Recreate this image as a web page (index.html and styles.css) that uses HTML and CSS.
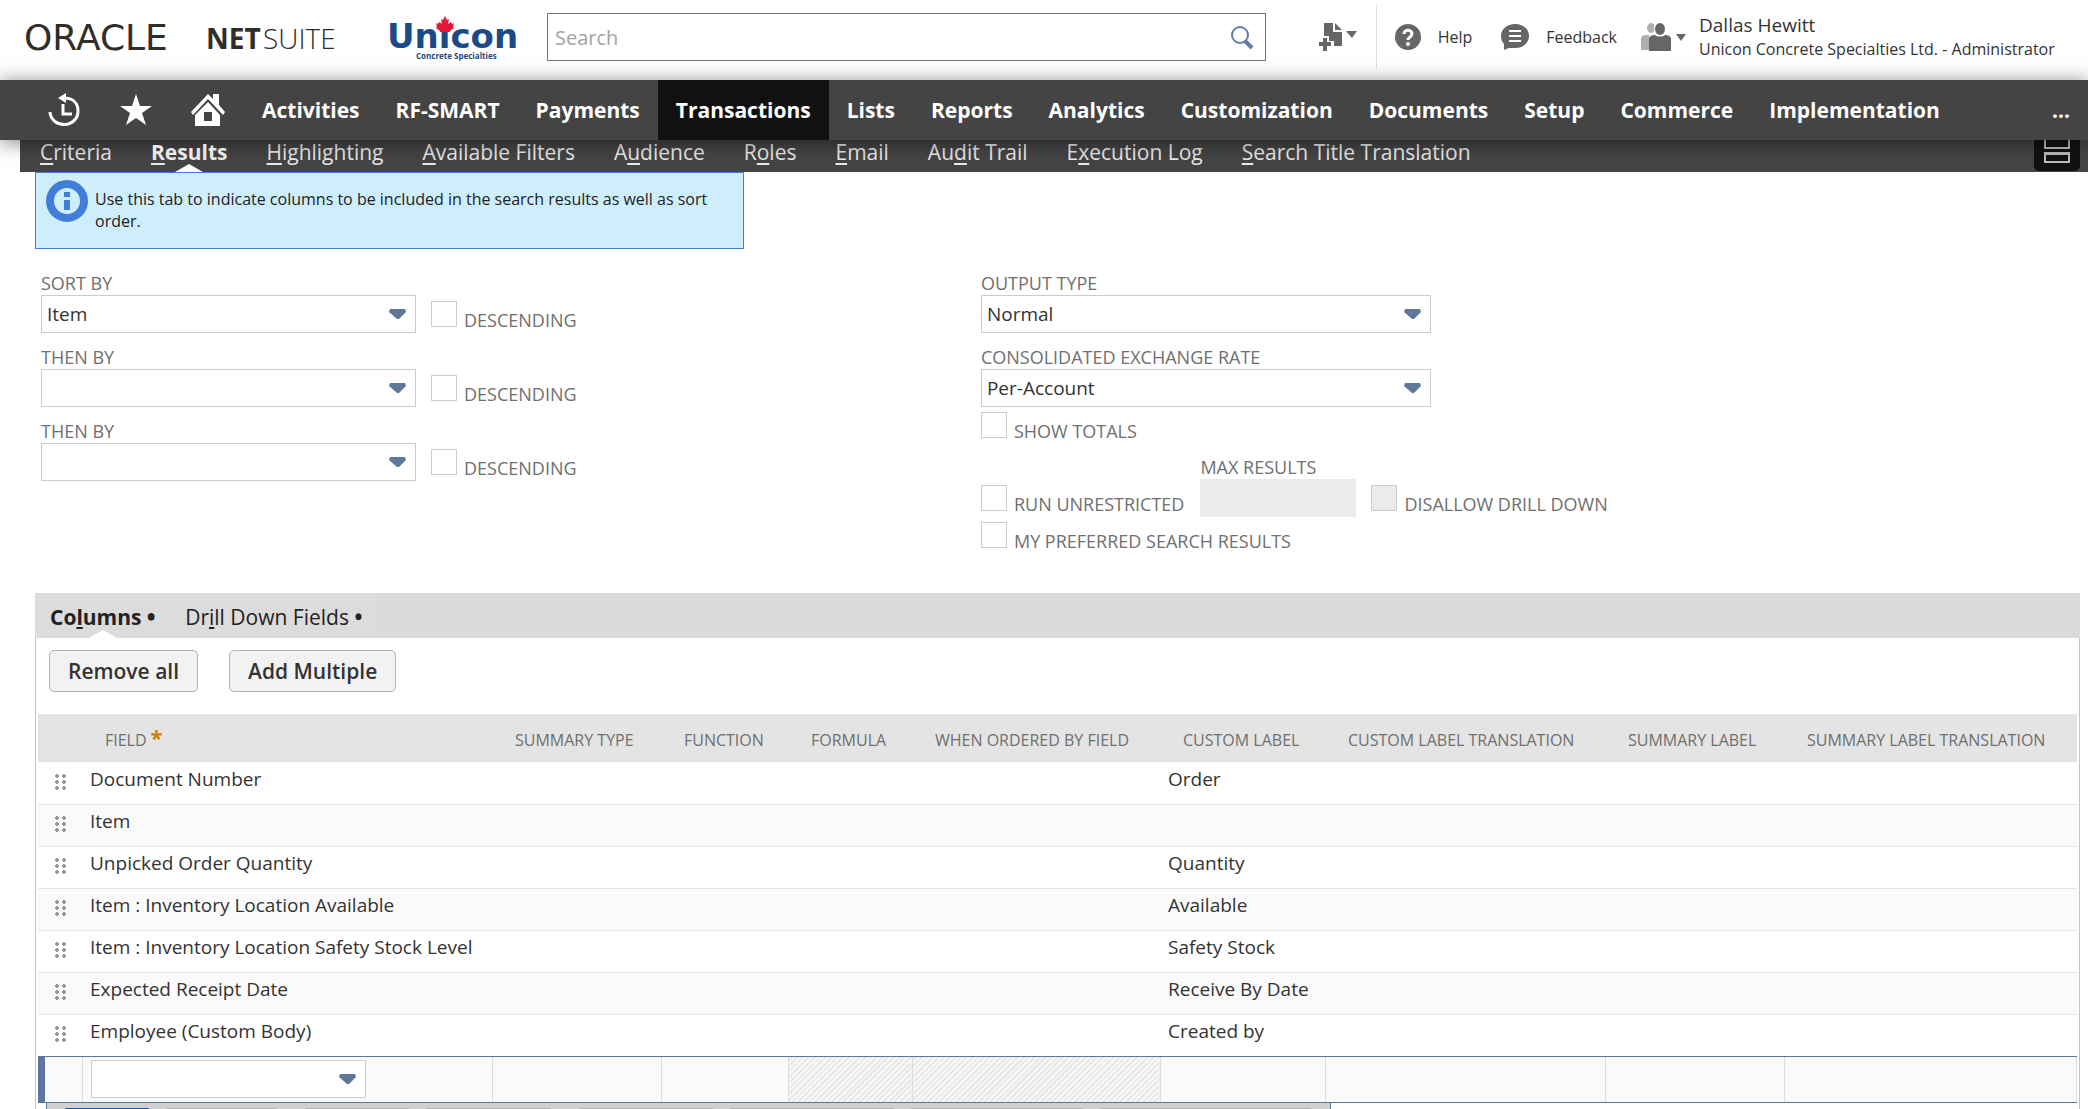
FILE: index.html
```html
<!DOCTYPE html>
<html lang="en">
<head>
  <meta charset="UTF-8">
  <meta name="viewport" content="width=device-width, initial-scale=1.0">
  <title>Saved Search - NetSuite</title>
  <link rel="stylesheet" href="styles.css">
</head>
<body>
<header class="topbar">
  <a class="logo" href="#" aria-label="Oracle NetSuite">
    <svg width="320" height="34" viewBox="0 0 320 34">
      <text class="logo-oracle" x="-2" y="30">ORACLE</text>
      <text class="logo-net" x="180" y="29">NET</text>
      <text class="logo-suite" x="237" y="29">SUITE</text>
    </svg>
  </a>
  <a class="company-logo" href="#" aria-label="Unicon Concrete Specialties">
    <svg width="137" height="48" viewBox="0 0 137 48">
      <text class="logo-unicon" x="-1" y="35">Unicon</text>
      <text class="logo-sub" x="28" y="46">Concrete Specialties</text>
      <path fill="#e31937" d="M57 3l2 4 2-1-1 5 3-2 1 2 2-1-1 4 1 1-4 3v1H52v-1l-4-3 1-1-1-4 2 1 1-2 3 2-1-5 2 1z"/>
    </svg>
  </a>
  <form class="search">
    <input type="text" placeholder="Search" aria-label="Search">
    <button type="button" aria-label="Run search">
      <svg width="26" height="26" viewBox="0 0 26 26" fill="none" stroke="#607da8">
        <circle cx="11" cy="11" r="8" stroke-width="2"/>
        <path d="M16 17l7 7" stroke-width="4"/>
      </svg>
    </button>
  </form>
  <div class="tools">
    <button class="create" aria-label="Create new">
      <svg width="40" height="30" viewBox="0 0 40 30" fill="#666">
        <path d="M6 1h9v9h9v14h-8v-5h-5v-5H6z"/>
        <path d="M17 1l7 7h-7z"/>
        <path d="M5 16h4v4h4v4H9v5H5v-5H1v-4h4z"/>
        <path d="M28 9h11l-5 7z"/>
      </svg>
    </button>
    <a class="tool help" href="#">
      <svg width="26" height="26" viewBox="0 0 26 26">
        <circle cx="13" cy="13" r="13" fill="#666"/>
        <path d="M9 10c0-5 8-5 8 0 0 3-4 3-4 6" fill="none" stroke="#fff" stroke-width="3"/>
        <circle cx="13" cy="20" r="2" fill="#fff"/>
      </svg>
      Help
    </a>
    <a class="tool feedback" href="#">
      <svg width="28" height="26" viewBox="0 0 28 26">
        <path d="M14 0c8 0 14 5 14 12s-6 12-14 12c-3 0-5 0-6 0l-5 2v-6C1 18 0 15 0 12 0 5 6 0 14 0z" fill="#666"/>
        <path d="M8 7h12M8 12h12M8 17h12" stroke="#fff" stroke-width="2"/>
      </svg>
      Feedback
    </a>
    <button class="role" aria-label="Change role">
      <svg width="46" height="30" viewBox="0 0 46 30">
        <g fill="#b0b0b0"><ellipse cx="10" cy="6" rx="4" ry="5"/><path d="M0 28V17c0-3 2-4 6-4h2v15z"/></g>
        <ellipse cx="19" cy="6" rx="6" ry="7" fill="#fff"/>
        <g fill="#666"><ellipse cx="19" cy="7" rx="5" ry="6"/><path d="M8 29V17c0-3 3-4 6-4 2 2 8 2 10 0 3 0 6 1 6 4v12z"/><path d="M35 12h10l-5 7z"/></g>
      </svg>
    </button>
    <div class="user">
      <div class="user-name">Dallas Hewitt</div>
      <div>Unicon Concrete Specialties Ltd. - Administrator</div>
    </div>
  </div>
</header>

<nav class="mainnav">
  <a class="icon" href="#" aria-label="Recent records">
    <svg width="32" height="34" viewBox="0 0 32 34" fill="none" stroke="#fff" stroke-width="3">
      <path d="M2 19a14 13 0 0 0 28-1C30 10 25 5 16 5"/>
      <path d="M10 5l8-5v10z" fill="#fff" stroke="none"/>
      <path d="M15 11v10h9"/>
    </svg>
  </a>
  <a class="icon" href="#" aria-label="Shortcuts">
    <svg width="32" height="32" viewBox="0 0 32 32"><path fill="#fff" d="M16 0l4 12h12l-10 7 4 12-10-7-10 7 4-12L0 12h12z"/></svg>
  </a>
  <a class="icon" href="#" aria-label="Home">
    <svg width="36" height="34" viewBox="0 0 36 34" fill="#fff">
      <path d="M18 1l5 5V1h6v11l6 7-2 3L18 6 3 22l-2-3z"/>
      <path fill-rule="evenodd" d="M18 9l12 13v11H5V22zM14 19v9h8v-9z"/>
    </svg>
  </a>
  <a href="#">Activities</a>
  <a href="#">RF-SMART</a>
  <a href="#">Payments</a>
  <a class="active" href="#">Transactions</a>
  <a href="#">Lists</a>
  <a href="#">Reports</a>
  <a href="#">Analytics</a>
  <a href="#">Customization</a>
  <a href="#">Documents</a>
  <a href="#">Setup</a>
  <a href="#">Commerce</a>
  <a href="#">Implementation</a>
  <a class="more" href="#">...</a>
</nav>

<nav class="subnav">
  <a href="#"><u>C</u>riteria</a>
  <a class="active" href="#"><u>R</u>esults</a>
  <a href="#"><u>H</u>ighlighting</a>
  <a href="#"><u>A</u>vailable Filters</a>
  <a href="#">A<u>u</u>dience</a>
  <a href="#">R<u>o</u>les</a>
  <a href="#"><u>E</u>mail</a>
  <a href="#">Au<u>d</u>it Trail</a>
  <a href="#">E<u>x</u>ecution Log</a>
  <a href="#"><u>S</u>earch Title Translation</a>
  <button class="layout" aria-label="Page layout">
    <svg width="26" height="24" viewBox="0 0 26 24" fill="none" stroke="#bbb" stroke-width="2">
      <path d="M1 0v8h24V0M1 13h24v9H1zM1 14h24"/>
    </svg>
  </button>
</nav>

<main>
  <div class="notice">
    <svg width="42" height="42" viewBox="0 0 42 42">
      <circle cx="21" cy="21" r="17" fill="none" stroke="#417ed9" stroke-width="8"/>
      <path d="M18 12h6v5h-6zM18 20h6v10h-6z" fill="#417ed9"/>
    </svg>
    <p>Use this tab to indicate columns to be included in the search results as well as sort order.</p>
  </div>

  <div class="options">
    <div class="sorting">
      <div class="line">
        <div class="field">
          <label for="sort1">SORT BY</label>
          <select id="sort1"><option>Item</option></select>
        </div>
        <div class="check"><input type="checkbox" id="desc1"><label for="desc1">DESCENDING</label></div>
      </div>
      <div class="line">
        <div class="field">
          <label for="sort2">THEN BY</label>
          <select id="sort2"><option></option></select>
        </div>
        <div class="check"><input type="checkbox" id="desc2"><label for="desc2">DESCENDING</label></div>
      </div>
      <div class="line">
        <div class="field">
          <label for="sort3">THEN BY</label>
          <select id="sort3"><option></option></select>
        </div>
        <div class="check"><input type="checkbox" id="desc3"><label for="desc3">DESCENDING</label></div>
      </div>
    </div>
    <div class="output">
      <div class="line">
        <div class="field">
          <label for="outputType">OUTPUT TYPE</label>
          <select id="outputType"><option>Normal</option></select>
        </div>
      </div>
      <div class="line">
        <div class="field">
          <label for="rate">CONSOLIDATED EXCHANGE RATE</label>
          <select id="rate"><option>Per-Account</option></select>
        </div>
      </div>
      <div class="check short"><input type="checkbox" id="totals"><label for="totals">SHOW TOTALS</label></div>
      <div class="line limits">
        <div class="check"><input type="checkbox" id="unrestricted"><label for="unrestricted">RUN UNRESTRICTED</label></div>
        <div class="field max">
          <label for="maxResults">MAX RESULTS</label>
          <input type="text" id="maxResults" disabled>
        </div>
        <div class="check"><input type="checkbox" id="drill" disabled><label for="drill">DISALLOW DRILL DOWN</label></div>
      </div>
      <div class="check short"><input type="checkbox" id="preferred"><label for="preferred">MY PREFERRED SEARCH RESULTS</label></div>
    </div>
  </div>

  <section class="sublist">
    <div class="tabs">
      <a class="active" href="#">Co<u>l</u>umns <b>•</b></a>
      <a href="#">Dr<u>i</u>ll Down Fields <b>•</b></a>
    </div>
    <div class="panel">
      <div class="actions">
        <button>Remove all</button>
        <button>Add Multiple</button>
      </div>
      <table>
        <colgroup>
          <col class="c-drag"><col class="c-field"><col class="c-type"><col class="c-function"><col class="c-formula">
          <col class="c-ordered"><col class="c-label"><col class="c-translation"><col class="c-summary"><col>
        </colgroup>
        <thead>
          <tr>
            <th></th>
            <th>FIELD<span class="required">*</span></th>
            <th>SUMMARY TYPE</th>
            <th>FUNCTION</th>
            <th>FORMULA</th>
            <th>WHEN ORDERED BY FIELD</th>
            <th>CUSTOM LABEL</th>
            <th>CUSTOM LABEL TRANSLATION</th>
            <th>SUMMARY LABEL</th>
            <th>SUMMARY LABEL TRANSLATION</th>
          </tr>
        </thead>
        <tbody>
          <tr><td><i class="grip"></i></td><td>Document Number</td><td></td><td></td><td></td><td></td><td>Order</td><td></td><td></td><td></td></tr>
          <tr><td><i class="grip"></i></td><td>Item</td><td></td><td></td><td></td><td></td><td></td><td></td><td></td><td></td></tr>
          <tr><td><i class="grip"></i></td><td>Unpicked Order Quantity</td><td></td><td></td><td></td><td></td><td>Quantity</td><td></td><td></td><td></td></tr>
          <tr><td><i class="grip"></i></td><td>Item : Inventory Location Available</td><td></td><td></td><td></td><td></td><td>Available</td><td></td><td></td><td></td></tr>
          <tr><td><i class="grip"></i></td><td>Item : Inventory Location Safety Stock Level</td><td></td><td></td><td></td><td></td><td>Safety Stock</td><td></td><td></td><td></td></tr>
          <tr><td><i class="grip"></i></td><td>Expected Receipt Date</td><td></td><td></td><td></td><td></td><td>Receive By Date</td><td></td><td></td><td></td></tr>
          <tr><td><i class="grip"></i></td><td>Employee (Custom Body)</td><td></td><td></td><td></td><td></td><td>Created by</td><td></td><td></td><td></td></tr>
          <tr class="editing">
            <td></td>
            <td><select aria-label="Field"><option></option></select></td>
            <td></td><td></td><td class="locked"></td><td class="locked"></td><td></td><td></td><td></td><td></td>
          </tr>
        </tbody>
      </table>
      <div class="rowbuttons">
        <button class="primary">Add</button>
        <button>Cancel</button>
        <button class="first">Insert</button>
        <button>Remove</button>
        <button class="first">Move Up</button>
        <button>Move Down</button>
        <button>Move To Top</button>
        <button>Move To Bottom</button>
      </div>
    </div>
  </section>
</main>
</body>
</html>
```
FILE: styles.css
```css
* {
  box-sizing: border-box;
}
body {
  margin: 0;
  height: 100vh;
  overflow: hidden;
  font-family: "Open Sans", sans-serif;
  font-size: 19px;
  color: #333;
  background: white;
}
a {
  color: inherit;
  text-decoration: none;
}
button, input, select {
  font-family: inherit;
  font-size: inherit;
  color: inherit;
}
button {
  padding: 0;
  border: none;
  background: none;
}
svg {
  display: block;
  flex: none;
  overflow: visible;
}

/* header */
.topbar {
  display: flex;
  align-items: center;
  height: 80px;
  padding: 0 22px 6px 26px;
}
.logo {
  margin-right: 42px;
}
.logo text {
  fill: #312d2a;
}
.logo-oracle {
  font: 36px "DejaVu Sans", sans-serif;
}
.logo-net {
  font: 700 28px "Open Sans", sans-serif;
}
.logo-suite {
  font: 300 28px "Open Sans", sans-serif;
}
.company-logo {
  margin-right: 22px;
}
.logo-unicon {
  font: bold 34px "DejaVu Sans", sans-serif;
  fill: #1b4a86;
}
.logo-sub {
  font: bold 8px "Open Sans", sans-serif;
  fill: #1b4a86;
}
.search {
  display: flex;
  align-items: center;
  flex: 0 1 719px;
  height: 48px;
  padding: 0 10px 0 7px;
  border: 1px solid #767676;
}
.search input {
  flex: 1;
  min-width: 0;
  border: none;
  outline: none;
  padding: 0;
  font-size: 20px;
}
.search input::placeholder {
  color: #a3a3a3;
}
.tools {
  display: flex;
  align-items: center;
  margin-left: auto;
  font-size: 16px;
}
.create {
  display: flex;
  align-items: center;
  height: 64px;
  padding-right: 18px;
  border-right: 1px solid #ddd;
}
.tool {
  display: flex;
  align-items: center;
  gap: 17px;
}
.help {
  margin: 0 29px 0 18px;
}
.role {
  margin: 0 12px 0 24px;
}
.user {
  min-width: 367px;
  line-height: 24px;
  white-space: nowrap;
}
.user-name {
  font-size: 19px;
}

/* navigation */
.mainnav {
  position: relative;
  display: flex;
  height: 60px;
  padding-left: 28px;
  background: #444;
  color: white;
  font-size: 21px;
  font-weight: bold;
  box-shadow: 0 2px 20px rgba(0,0,0,0.5);
}
.mainnav a {
  display: flex;
  align-items: center;
  padding: 0 18px;
  white-space: nowrap;
}
.mainnav .icon {
  justify-content: center;
  width: 72px;
  padding: 0;
}
.mainnav .active {
  background: #111;
}
.mainnav .more {
  margin-left: auto;
}
.subnav {
  display: flex;
  height: 32px;
  margin-left: 20px;
  padding: 0 8px 0 20px;
  gap: 39px;
  background: #444;
  color: #e8e8e8;
  font-size: 21px;
  line-height: 25px;
  white-space: nowrap;
}
.subnav u {
  text-decoration-thickness: 2px;
  text-underline-offset: 3px;
}
.subnav .active {
  position: relative;
  font-weight: bold;
}
.subnav .active::after, .tabs .active::after {
  content: "";
  position: absolute;
  bottom: 0;
  left: 50%;
  margin-left: -14px;
  border: 14px solid transparent;
  border-top: none;
  border-bottom: 8px solid white;
}
.layout {
  width: 46px;
  height: 31px;
  margin-left: auto;
  padding: 0 10px 8px;
  border-radius: 0 0 5px 5px;
  background: #111;
}

/* search options */
main {
  padding: 0 8px 0 35px;
}
.notice {
  display: flex;
  gap: 7px;
  width: 709px;
  height: 77px;
  padding: 7px 10px;
  border: 1px solid #417ed9;
  background: #cfeefc;
  color: #222;
  font-size: 16px;
  line-height: 22px;
}
.notice p {
  margin: 8px 0 0;
}
.options {
  display: grid;
  grid-template-columns: 46% 1fr;
  gap: 2px;
  padding: 22px 0 0 6px;
  color: #6f6f6f;
  font-size: 18px;
}
.line {
  display: flex;
  height: 74px;
}
.field label {
  display: block;
  line-height: 24px;
}
.field select, .editing select {
  display: block;
  appearance: none;
  width: 375px;
  height: 38px;
  padding: 0 5px;
  border: 1px solid #ccc;
  border-radius: 0;
  background: white url("data:image/svg+xml,%3Csvg xmlns='http://www.w3.org/2000/svg' width='20' height='12'%3E%3Cpath d='M2 1h15l1 3-7 7H9L1 4z' fill='%23607799'/%3E%3C/svg%3E") no-repeat right 7px center;
  color: #333;
  font-size: 19px;
}
.output .field select {
  width: 450px;
}
.check {
  display: flex;
  align-items: flex-start;
  gap: 7px;
  padding-top: 30px;
  line-height: 24px;
}
.check label {
  margin-top: 7px;
}
.check input {
  appearance: none;
  flex: none;
  width: 26px;
  height: 26px;
  margin: 0;
  border: 1px solid #ccc;
  background: white;
}
.check input:disabled {
  background: #ebebeb;
}
.sorting .check {
  margin-left: 15px;
}
.check.short {
  height: 37px;
  padding-top: 0;
}
.output .short:nth-child(3) {
  height: 43px;
  margin-top: -7px;
}
.limits {
  height: 67px;
}
.limits .max {
  margin: 0 15px 0 16px;
}
.max input {
  width: 156px;
  height: 38px;
  border: none;
  background: #ebebeb;
}

/* sublist */
.sublist {
  margin-top: 34px;
}
.tabs {
  display: flex;
  height: 45px;
  background: #dadada;
  color: #222;
  font-size: 21px;
  line-height: 49px;
}
.tabs a {
  position: relative;
  padding: 0 15px;
  background: #dcdcdc;
}
.tabs .active {
  font-weight: bold;
}
.panel {
  padding: 12px 2px 0;
  border: solid #c4c4c4;
  border-width: 0 1px;
}
.actions {
  display: flex;
  gap: 31px;
  padding: 0 11px 22px;
}
.actions button, .rowbuttons button {
  height: 42px;
  padding: 0 18px;
  border: 1px solid #b2b2b2;
  border-radius: 5px;
  background: #f2f2f2;
  font-size: 21px;
  font-weight: 600;
}
table {
  width: 100%;
  border-collapse: collapse;
  table-layout: fixed;
}
.c-drag { width: 44px; }
.c-field { width: 410px; }
.c-type { width: 169px; }
.c-function { width: 127px; }
.c-formula { width: 124px; }
.c-ordered { width: 248px; }
.c-label { width: 165px; }
.c-translation { width: 280px; }
.c-summary { width: 179px; }
th {
  height: 48px;
  padding: 4px 0 0 23px;
  background: #e4e4e4;
  color: #6f6f6f;
  font-size: 16px;
  font-weight: normal;
  text-align: left;
  white-space: nowrap;
}
.required {
  margin-left: 4px;
  color: #d08000;
  font-size: 22px;
  font-weight: bold;
  line-height: 16px;
}
td {
  height: 42px;
  padding: 0 0 8px 8px;
  border-bottom: 1px solid #e5e5e5;
  white-space: nowrap;
}
tbody tr:nth-child(even) td {
  background: #fafafa;
}
tbody tr:nth-last-child(2) td {
  border-bottom-color: #5c779f;
}
.grip {
  display: block;
  width: 12px;
  height: 18px;
  margin: 6px 0 0 8px;
  background: radial-gradient(circle at 3px 3px, #999 2px, transparent 2px) 0 0 / 7px 6px;
}
.editing td {
  height: 46px;
  padding: 0 8px;
  border: 1px solid #ddd;
  border-bottom-color: #5c779f;
}
.editing td:first-child {
  border-left: none;
  box-shadow: inset 7px 0 #5c779f;
}
.editing select {
  width: 275px;
}
tbody .editing .locked {
  background: repeating-linear-gradient(135deg, #fafafa 0 2px, #e6e6e6 2px 4px);
}
.rowbuttons {
  display: flex;
  gap: 11px;
  width: fit-content;
  margin-left: 8px;
  padding: 5px 15px;
  border: 1px solid #5c779f;
  border-top: none;
  background: #d0d0d0;
}
.rowbuttons button {
  padding: 0 24px;
}
.rowbuttons .first {
  margin-left: 11px;
}
.rowbuttons .primary {
  background: #0f7bf0;
  border-color: #0a5ab5;
  color: white;
}
```
